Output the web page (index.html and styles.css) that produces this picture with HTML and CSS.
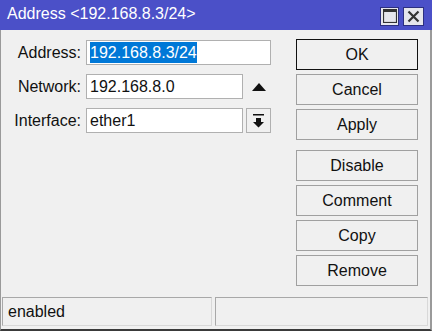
FILE: index.html
```html
<!DOCTYPE html>
<html lang="en">
<head>
    <meta charset="UTF-8">
    <meta name="viewport" content="width=device-width, initial-scale=1.0">
    <title>Address &lt;192.168.8.3/24&gt;</title>
    <link rel="stylesheet" href="styles.css">
</head>
<body>
    <div class="window">
        <div class="titlebar">
            <span class="title">Address &lt;192.168.8.3/24&gt;</span>
            <div class="title-buttons">
                <span class="tbtn">
                    <svg width="14" height="14" viewBox="0 0 14 14">
                        <rect x="0.5" y="0.5" width="13" height="13" fill="none" stroke="#333" stroke-width="1.2"/>
                        <rect x="0.5" y="0.5" width="13" height="2.5" fill="#333"/>
                    </svg>
                </span>
                <span class="tbtn close">
                    <svg width="13" height="13" viewBox="0 0 13 13">
                        <path d="M1.5 1.5 L11.5 11.5 M11.5 1.5 L1.5 11.5" stroke="#333" stroke-width="2.2"/>
                    </svg>
                </span>
            </div>
        </div>

        <div class="content">
            <div class="form">
                <div class="row">
                    <label class="label">Address:</label>
                    <div class="field wide"><span class="selected">192.168.8.3/24</span></div>
                </div>
                <div class="row">
                    <label class="label">Network:</label>
                    <div class="field">192.168.8.0</div>
                    <span class="side-icon">
                        <svg width="14" height="8" viewBox="0 0 14 8">
                            <path d="M0 8 L7 0 L14 8 Z" fill="#111"/>
                        </svg>
                    </span>
                </div>
                <div class="row">
                    <label class="label">Interface:</label>
                    <div class="field">ether1</div>
                    <span class="side-icon dropdown">
                        <svg width="11" height="14" viewBox="0 0 11 14">
                            <rect x="0" y="0" width="11" height="1.5" fill="#111"/>
                            <path d="M3 4 H8 V8 H11 L5.5 13.5 L0 8 H3 Z" fill="#111"/>
                        </svg>
                    </span>
                </div>
            </div>

            <div class="actions">
                <div class="group">
                    <button class="btn default">OK</button>
                    <button class="btn">Cancel</button>
                    <button class="btn">Apply</button>
                </div>
                <div class="group">
                    <button class="btn">Disable</button>
                    <button class="btn">Comment</button>
                    <button class="btn">Copy</button>
                    <button class="btn">Remove</button>
                </div>
            </div>
        </div>

        <div class="statusbar">
            <div class="panel left">enabled</div>
            <div class="panel"></div>
        </div>
    </div>
</body>
</html>
```

FILE: styles.css
```css
* {
    margin: 0;
    padding: 0;
    box-sizing: border-box;
}

body {
    font-family: "Liberation Sans", Arial, sans-serif;
    font-size: 16px;
    color: #111;
    background: #f0f0f0;
}

.window {
    width: 432px;
    height: 331px;
    display: flex;
    flex-direction: column;
    background: #f0f0f0;
    border-left: 1px solid #9a9a9a;
    border-right: 2px solid #9a9a9a;
    border-bottom: 2px solid #3a3a3a;
}

.titlebar {
    height: 30px;
    margin: 0 -2px 0 -1px;
    background: #4b50c8;
    color: white;
    display: flex;
    align-items: center;
    justify-content: space-between;
    padding: 0 8px 0 7px;
}

.title {
    font-size: 16px;
    padding-bottom: 2px;
}

.title-buttons {
    display: flex;
    gap: 4px;
    padding-top: 2px;
}

.tbtn {
    width: 19px;
    height: 19px;
    background: #e6e6ec;
    border: 1px solid #2c2f80;
    display: flex;
    align-items: center;
    justify-content: center;
}

.tbtn.close {
    width: 21px;
}

.content {
    flex: 1;
    display: flex;
    padding-top: 9px;
}

.form {
    padding-top: 1px;
    display: flex;
    flex-direction: column;
    gap: 9px;
}

.row {
    display: flex;
    align-items: center;
    height: 25px;
}

.label {
    width: 80px;
    text-align: right;
    margin-right: 5px;
}

.field {
    width: 157px;
    height: 25px;
    background: white;
    border: 1px solid #b0b0b0;
    padding: 0 3px;
    line-height: 23px;
    white-space: nowrap;
}

.field.wide {
    width: 185px;
}

.selected {
    background: #0078d7;
    color: white;
    padding: 2px 0;
}

.side-icon {
    width: 25px;
    height: 25px;
    margin-left: 3px;
    display: flex;
    align-items: center;
    justify-content: center;
}

.side-icon.dropdown {
    border: 1px solid #b0b0b0;
    background: #f0f0f0;
}

.actions {
    margin-left: auto;
    margin-right: 12px;
    width: 122px;
    display: flex;
    flex-direction: column;
    gap: 10px;
}

.group {
    display: flex;
    flex-direction: column;
    gap: 4px;
}

.btn {
    font-family: "Liberation Sans", Arial, sans-serif;
    font-size: 16px;
    color: #111;
    height: 31px;
    background: #f0f0f0;
    border: 1px solid #a0a0a0;
}

.btn.default {
    border-color: #111;
}

.statusbar {
    height: 32px;
    display: flex;
    gap: 3px;
    padding: 0 2px 3px 1px;
}

.panel {
    flex: 1;
    border: 1px solid #a8a8a8;
    border-right-color: #d8d8d8;
    border-bottom-color: #d8d8d8;
    line-height: 28px;
    padding-left: 5px;
}

.panel.left {
    flex: 0 0 210px;
}
```
